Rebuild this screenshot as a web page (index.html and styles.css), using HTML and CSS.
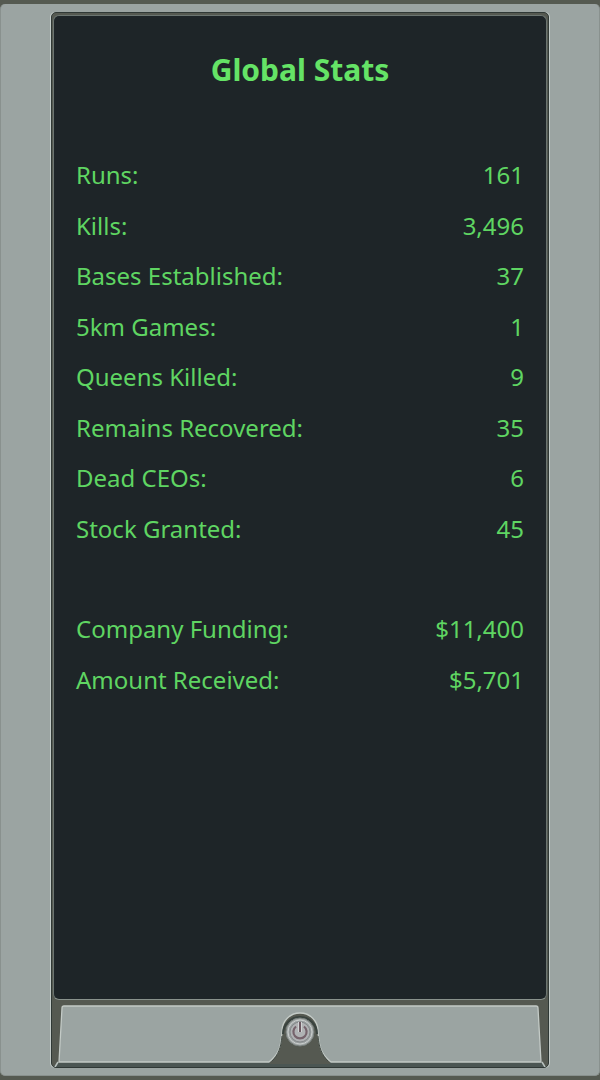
FILE: index.html
```html
<!DOCTYPE html>
<html lang="en">
<head>
<meta charset="utf-8">
<meta name="viewport" content="width=device-width, initial-scale=1">
<title>Global Stats</title>
<link rel="stylesheet" href="styles.css">
</head>
<body>
<div class="casing">
  <div class="console">
    <main class="screen">
      <h1 class="title">Global Stats</h1>
      <table class="stats">
        <tbody>
          <tr><th scope="row">Runs:</th><td>161</td></tr>
          <tr><th scope="row">Kills:</th><td>3,496</td></tr>
          <tr><th scope="row">Bases Established:</th><td>37</td></tr>
          <tr><th scope="row">5km Games:</th><td>1</td></tr>
          <tr><th scope="row">Queens Killed:</th><td>9</td></tr>
          <tr><th scope="row">Remains Recovered:</th><td>35</td></tr>
          <tr><th scope="row">Dead CEOs:</th><td>6</td></tr>
          <tr><th scope="row">Stock Granted:</th><td>45</td></tr>
          <tr class="spacer"><td colspan="2"></td></tr>
          <tr><th scope="row">Company Funding:</th><td>$11,400</td></tr>
          <tr><th scope="row">Amount Received:</th><td>$5,701</td></tr>
        </tbody>
      </table>
    </main>
    <footer class="base">
      <svg class="plate" viewBox="0 0 496 67" aria-hidden="true">
        <path d="M7 62H489L495 67H1Z" fill="#4b5653"/>
        <path d="M218 62C226 55 229 49 230 31A18 18 0 0 1 266 31C267 49 270 55 278 62V64H218Z" fill="#555951"/>
        <path d="M12 6H484Q486 6 486 8L489 62H279C270 55 267 49 266 31A18 18 0 0 0 230 31C229 49 226 55 217 62H7L10 8Q10 6 12 6Z" fill="#9ba4a2" stroke="#c3cac6" stroke-width="1.3"/>
        <path d="M231 34A17 17 0 1 1 265 34" fill="none" stroke="#39433f" stroke-width="2"/>
        <path d="M230 36C229 48 226 55 220 61M266 36C267 48 270 55 276 61" fill="none" stroke="#414943"/>
        <path d="M6 62L3 67M490 62L493 67" stroke="#b8c1be" stroke-width="1.5"/>
      </svg>
      <button class="power" type="button" aria-label="Power">
        <svg viewBox="0 0 30 30" aria-hidden="true">
          <circle cx="15" cy="15" r="14" fill="#a5aaa9" stroke="#767e7b"/>
          <circle cx="15" cy="15" r="12" fill="#9a9fa0" stroke="#c9cecd"/>
          <circle cx="15" cy="15" r="10" fill="#b0b2b4" stroke="#858a8b"/>
          <path d="M11 9.500A6.600 6.600 0 1 0 19 9.500" fill="none" stroke="#76636c" stroke-width="2.200"/>
          <path d="M15 5V15" stroke="#d0d2d3" stroke-width="4"/>
          <path d="M15 5V15" stroke="#6d5a63" stroke-width="2"/>
        </svg>
      </button>
    </footer>
  </div>
</div>
</body>
</html>
```
FILE: styles.css
```css
* {
  box-sizing: border-box;
}

body {
  margin: 0;
  min-height: 100vh;
  display: flex;
  padding: 4px 0;
  background: #555a51;
  color: #5fd562;
  font-family: "Noto Sans", sans-serif;
}

.casing {
  flex: 1;
  display: flex;
  padding: 8px 50px 7px;
  border: 1px solid #89918e;
  border-width: 0 1px 1px;
  border-radius: 5px;
  background: #9ba4a2;
}

.console {
  flex: 1;
  display: flex;
  flex-direction: column;
  border: 1px solid #303936;
  border-radius: 5px;
  background: #555951;
  box-shadow: -1px 0 #c3cbc8, 1px 0 #c3cbc8;
}

.screen {
  flex: 1;
  margin: 2px 1px 0;
  padding: 30px 22px;
  border: 1px solid #6b7571;
  border-bottom-color: #89928c;
  border-radius: 6px;
  background: #1e2528;
}

.title {
  margin: 0 0 56px;
  color: #65e366;
  text-align: center;
  font-size: 30px;
  line-height: 48px;
  font-weight: 700;
}

.stats {
  width: 100%;
  height: 555px;
  border-collapse: collapse;
  font-size: 24px;
  line-height: 34px;
}

.stats th,
.stats td {
  padding: 0;
  font-weight: 400;
  text-align: left;
}

.stats td {
  text-align: right;
}

.spacer {
  height: 50px;
}

.base {
  position: relative;
}

.plate {
  display: block;
  width: 100%;
}

.power {
  position: absolute;
  top: 17px;
  left: 50%;
  width: 30px;
  height: 30px;
  margin-left: -15px;
  padding: 0;
  border: 0;
  border-radius: 50%;
  background: none;
  cursor: pointer;
}

.power svg {
  display: block;
}
```
